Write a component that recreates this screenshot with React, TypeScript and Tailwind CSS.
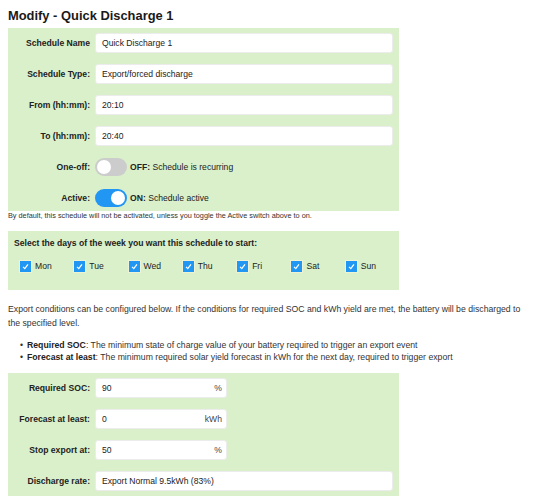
import React from 'react';

const panel = 'bg-[#d9f0cb] w-[391px]';

function Label({ children }: { children: React.ReactNode }) {
  return <div className="w-[82px] shrink-0 text-right font-bold text-[#222]">{children}</div>;
}

function TextField({ label, value, unit, short }: { label: string; value: string; unit?: string; short?: boolean }) {
  return (
    <div className="flex items-center h-[20px]">
      <Label>{label}</Label>
      <div
        className={`ml-[5px] h-[20px] rounded-[3px] bg-white border border-[#ececec] flex items-center justify-between pl-[6px] pr-[4px] text-[#222] ${
          short ? 'w-[132px]' : 'w-[298px]'
        }`}
      >
        <span>{value}</span>
        {unit && <span className="text-[#444]">{unit}</span>}
      </div>
    </div>
  );
}

function Toggle({ label, on, state, text }: { label: string; on: boolean; state: string; text: string }) {
  return (
    <div className="flex items-center h-[20px]">
      <Label>{label}</Label>
      <div
        className={`ml-[5px] w-[32px] h-[18px] rounded-full flex items-center px-[2px] ${
          on ? 'bg-[#2196f3] justify-end' : 'bg-[#cccccc] justify-start'
        }`}
      >
        <div className="w-[14px] h-[14px] rounded-full bg-white" />
      </div>
      <div className="ml-[3px] text-[#222]">
        <span className="font-bold">{state}</span> {text}
      </div>
    </div>
  );
}

function Day({ name }: { name: string }) {
  return (
    <div className="w-[54.5px] flex items-center">
      <div className="w-[13px] h-[13px] bg-[#2196f3] border border-[#eef3d6] flex items-center justify-center">
        <svg width="7" height="7" viewBox="0 0 10 10">
          <polyline points="1.5,5.5 4,8 8.5,2" fill="none" stroke="white" strokeWidth="1.8" />
        </svg>
      </div>
      <span className="ml-[3px] text-[#222]">{name}</span>
    </div>
  );
}

export default function App() {
  const days = ['Mon', 'Tue', 'Wed', 'Thu', 'Fri', 'Sat', 'Sun'];
  return (
    <div className="w-[539px] h-[500px] bg-white pl-[8px] font-['Liberation_Sans',Arial,sans-serif] text-[8.6px] leading-[11px] text-[#222] overflow-hidden">
      <h1 className="pt-[8px] pb-[5px] text-[12.9px] leading-[15px] font-bold text-[#1a1a1a]">Modify - Quick Discharge 1</h1>

      <div className={`${panel} pt-[5px] pb-[3px] flex flex-col gap-[11px]`}>
        <TextField label="Schedule Name" value="Quick Discharge 1" />
        <TextField label="Schedule Type:" value="Export/forced discharge" />
        <TextField label="From (hh:mm):" value="20:10" />
        <TextField label="To (hh:mm):" value="20:40" />
        <Toggle label="One-off:" on={false} state="OFF:" text="Schedule is recurring" />
        <Toggle label="Active:" on={true} state="ON:" text="Schedule active" />
      </div>

      <p className="text-[7.3px] leading-[10px] text-[#333] mb-[10px]">
        By default, this schedule will not be activated, unless you toggle the Active switch above to on.
      </p>

      <div className={`${panel} pt-[7px] pb-[17px] pl-[6px]`}>
        <div className="font-bold">Select the days of the week you want this schedule to start:</div>
        <div className="flex mt-[11px] pl-[5px]">
          {days.map(d => (
            <Day key={d} name={d} />
          ))}
        </div>
      </div>

      <p className="mt-[12px] text-[8.7px] leading-[14px] text-[#333] pr-[10px]">
        Export conditions can be configured below. If the conditions for required SOC and kWh yield are met, the battery will be discharged to the specified level.
      </p>

      <ul className="mt-[9px] text-[8.7px] leading-[12px] text-[#333]">
        <li className="flex">
          <span className="w-[19px] text-right pr-[4px]">•</span>
          <span>
            <b className="text-[#222]">Required SOC</b>: The minimum state of charge value of your battery required to trigger an export event
          </span>
        </li>
        <li className="flex">
          <span className="w-[19px] text-right pr-[4px]">•</span>
          <span>
            <b className="text-[#222]">Forecast at least</b>: The minimum required solar yield forecast in kWh for the next day, required to trigger export
          </span>
        </li>
      </ul>

      <div className={`${panel} mt-[10px] pt-[5px] pb-[5px] flex flex-col gap-[11px]`}>
        <TextField label="Required SOC:" value="90" unit="%" short />
        <TextField label="Forecast at least:" value="0" unit="kWh" short />
        <TextField label="Stop export at:" value="50" unit="%" short />
        <TextField label="Discharge rate:" value="Export Normal 9.5kWh (83%)" />
      </div>
    </div>
  );
}
